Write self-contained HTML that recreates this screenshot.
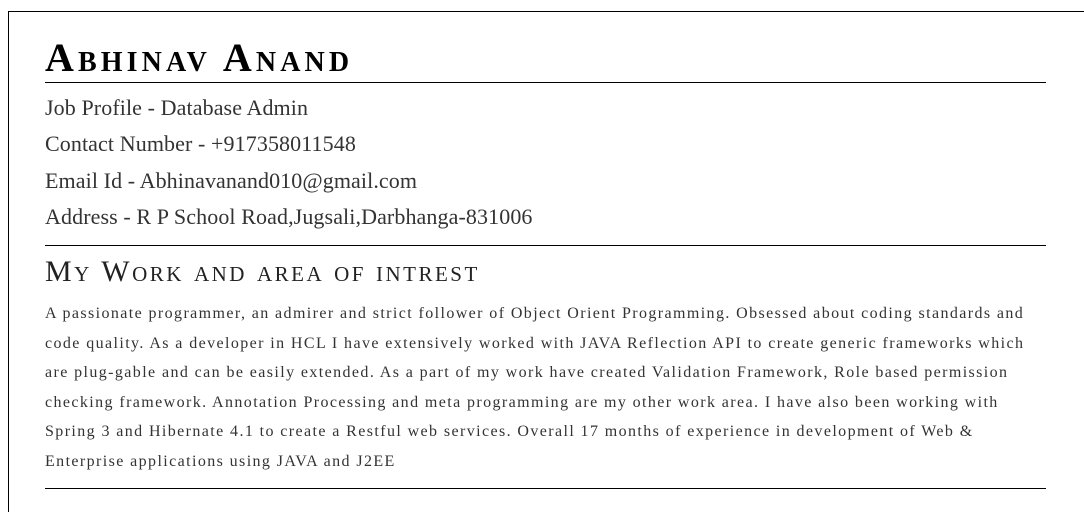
<!DOCTYPE html>
<html><head><meta charset="utf-8"><style>
body{margin:0;width:1084px;height:489px;overflow:hidden;background:#fff;font-family:"Liberation Serif",serif;color:#333;}
.box{position:absolute;left:8px;top:11px;width:1100px;height:500px;border-left:1px solid #000;border-top:1px solid #000;}
.a{position:absolute;left:45px;white-space:nowrap;}
.hr{position:absolute;left:45px;width:1001px;height:1px;background:#000;}
h1{position:absolute;left:45px;top:34px;margin:0;font-size:40px;font-variant:small-caps;font-weight:bold;color:#000;letter-spacing:4.1px;white-space:nowrap;}
.l{font-size:22px;letter-spacing:0.1px;}
h2{position:absolute;left:45px;top:255px;margin:0;font-size:30px;font-weight:normal;font-variant:small-caps;color:#222;letter-spacing:2.5px;white-space:nowrap;}
p{position:absolute;left:45px;top:299px;margin:0;font-size:16px;line-height:29.6px;color:#333;white-space:nowrap;letter-spacing:1.4px;}
</style></head><body>
<div class="box"></div>
<h1>Abhinav Anand</h1>
<div class="hr" style="top:82px"></div>
<div class="a l" style="top:95px">Job Profile - Database Admin</div>
<div class="a l" style="top:131px">Contact Number - +917358011548</div>
<div class="a l" style="top:168px">Email Id - Abhinavanand010@gmail.com</div>
<div class="a l" style="top:204px">Address - R P School Road,Jugsali,Darbhanga-831006</div>
<div class="hr" style="top:245px"></div>
<h2>My Work and area of intrest</h2>
<p>A passionate programmer, an admirer and strict follower of Object Orient Programming. Obsessed about coding standards and<br>code quality. As a developer in HCL I have extensively worked with JAVA Reflection API to create generic frameworks which<br>are plug-gable and can be easily extended. As a part of my work have created Validation Framework, Role based permission<br>checking framework. Annotation Processing and meta programming are my other work area. I have also been working with<br>Spring 3 and Hibernate 4.1 to create a Restful web services. Overall 17 months of experience in development of Web &amp;<br>Enterprise applications using JAVA and J2EE</p>
<div class="hr" style="top:488px"></div>
</body></html>
